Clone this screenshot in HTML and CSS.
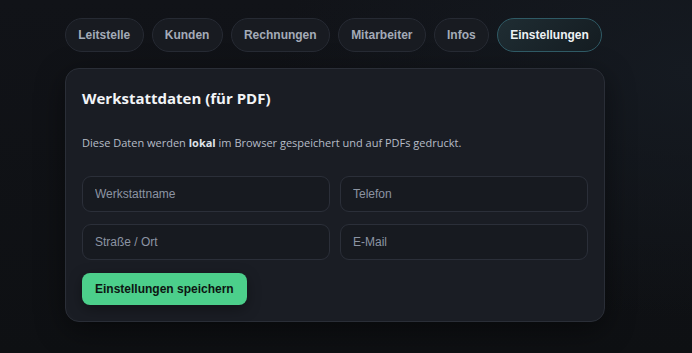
FILE: index.html
```html
<!DOCTYPE html>
<html lang="de">
<head>
    <meta charset="UTF-8">
    <meta name="viewport" content="width=device-width, initial-scale=1.0">
    <title>Werkstatt</title>
    <link rel="stylesheet" href="styles.css">
</head>
<body>
    <div class="wrap">
        <nav class="tabs">
            <button class="tab">Leitstelle</button>
            <button class="tab">Kunden</button>
            <button class="tab">Rechnungen</button>
            <button class="tab">Mitarbeiter</button>
            <button class="tab">Infos</button>
            <button class="tab active">Einstellungen</button>
        </nav>

        <section class="card">
            <h2>Werkstattdaten (für PDF)</h2>
            <p class="hint">Diese Daten werden <b>lokal</b> im Browser gespeichert und auf PDFs gedruckt.</p>
            <div class="grid">
                <input type="text" placeholder="Werkstattname">
                <input type="text" placeholder="Telefon">
                <input type="text" placeholder="Straße / Ort">
                <input type="text" placeholder="E-Mail">
            </div>
            <button class="save">Einstellungen speichern</button>
        </section>
    </div>
</body>
</html>
```

FILE: styles.css
```css
body {
    margin: 0;
    min-height: 353px;
    background:
        radial-gradient(ellipse 60% 70% at 100% 20%, #151a21 0%, rgba(21, 26, 33, 0) 100%),
        linear-gradient(180deg, #111318 0%, #0e1013 100%);
    font-family: "Liberation Sans", Arial, sans-serif;
    color: #e6e8ec;
}
.wrap {
    width: 540px;
    margin-left: 65px;
    padding-top: 18px;
}
.tabs {
    display: flex;
    gap: 8px;
    margin-bottom: 16px;
}
.tab {
    font-family: "Liberation Sans", Arial, sans-serif;
    font-size: 12px;
    font-weight: bold;
    line-height: 16px;
    padding: 8px 12.25px;
    border: 1px solid #262a33;
    border-radius: 999px;
    background: #181b21;
    color: #a4abb8;
    cursor: pointer;
}
.tab.active {
    background: linear-gradient(135deg, #1f2d33, #141c21);
    border-color: #2f5a65;
    color: #eef1f4;
}
.card {
    background: #1a1d24;
    border: 1px solid #2a2e37;
    border-radius: 14px;
    padding: 18px 16px 16px 16px;
    box-shadow: 0 8px 30px rgba(0, 0, 0, 0.45);
}
.card h2 {
    margin: 0;
    font-family: "Open Sans", "Noto Sans", sans-serif;
    font-size: 15px;
    font-weight: 700;
    line-height: 22px;
    color: #f2f4f7;
}
.hint {
    margin: 26px 0 25px 0;
    font-family: "Open Sans", "Noto Sans", sans-serif;
    font-size: 11px;
    line-height: 16px;
    color: #b6bcc7;
}
.hint b { color: #dfe3e9; }
.grid {
    display: grid;
    grid-template-columns: 1fr 1fr;
    gap: 12px 10px;
    margin-bottom: 13px;
}
.grid input {
    height: 36px;
    box-sizing: border-box;
    padding: 0 12px;
    border: 1px solid #2b2f39;
    border-radius: 9px;
    background: #171a20;
    color: #e6e8ec;
    font-family: "Liberation Sans", Arial, sans-serif;
    font-size: 12px;
    outline: none;
}
.grid input::placeholder { color: #8c94a3; }
.save {
    height: 32px;
    padding: 0 13px;
    border: none;
    border-radius: 8px;
    background: #4ccf8b;
    color: #0d1512;
    font-family: "Liberation Sans", Arial, sans-serif;
    font-size: 12px;
    font-weight: bold;
    box-shadow: 0 4px 14px rgba(0, 0, 0, 0.35);
    cursor: pointer;
}
```
